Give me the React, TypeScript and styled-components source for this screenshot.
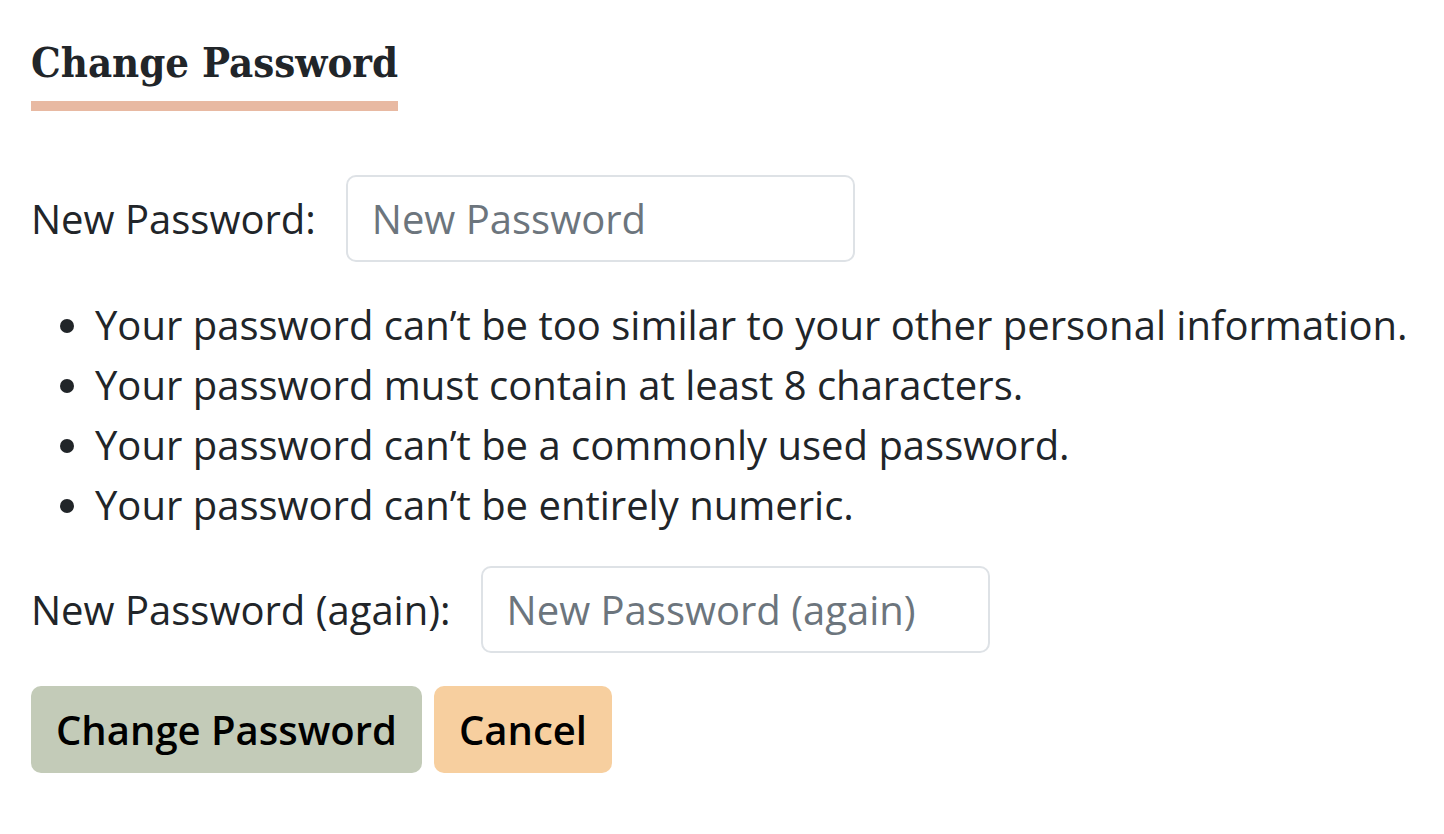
import styled, { createGlobalStyle } from "styled-components";

const GlobalStyle = createGlobalStyle`
    body {
        margin: 0;
        background: #ffffff;
        color: #212529;
        font-family: "Open Sans", "Noto Sans", sans-serif;
    }
`;

const rules = [
    "Your password can’t be too similar to your other personal information.",
    "Your password must contain at least 8 characters.",
    "Your password can’t be a commonly used password.",
    "Your password can’t be entirely numeric.",
];

export default function App() {
    return (
        <>
            <GlobalStyle />
            <Page>
                <Title>Change Password</Title>
                <Form onSubmit={e => e.preventDefault()}>
                    <Field>
                        <Label htmlFor="pw1">New Password:</Label>
                        <Input id="pw1" type="password" placeholder="New Password" />
                    </Field>
                    <Rules>
                        {rules.map(rule => (
                            <li key={rule}>{rule}</li>
                        ))}
                    </Rules>
                    <Field>
                        <Label htmlFor="pw2">New Password (again):</Label>
                        <Input id="pw2" type="password" placeholder="New Password (again)" />
                    </Field>
                    <Actions>
                        <Button type="submit" $tone="primary">
                            Change Password
                        </Button>
                        <Button type="button" $tone="cancel">
                            Cancel
                        </Button>
                    </Actions>
                </Form>
            </Page>
        </>
    );
}

const Page = styled.main`
    padding: 33px 31px;
    display: flex;
    flex-direction: column;
    align-items: flex-start;
`;

const Title = styled.h2`
    display: inline-block;
    margin: 0;
    padding-bottom: 8px;
    font-family: "DejaVu Serif", "Liberation Serif", serif;
    font-stretch: condensed;
    font-weight: 700;
    font-size: 41.5px;
    line-height: 60px;
    color: #212529;
    border-bottom: 10px solid #e8b9a2;
`;

const Form = styled.form`
    margin-top: 64px;
    display: flex;
    flex-direction: column;
    align-items: flex-start;
`;

const Field = styled.div`
    display: flex;
    align-items: center;
`;

const Label = styled.label`
    font-size: 40px;
    line-height: 60px;
    margin-right: 30px;
`;

const Input = styled.input`
    box-sizing: border-box;
    width: 509px;
    height: 87px;
    padding: 12px 24px;
    font-family: inherit;
    font-size: 40px;
    color: #212529;
    background: #fff;
    border: 2px solid #dee2e6;
    border-radius: 10px;
    outline: none;

    &::placeholder {
        color: #6c757d;
    }
`;

const Rules = styled.ul`
    margin: 33px 0 31px;
    padding-left: 64px;
    font-size: 40px;
    line-height: 60px;
`;

const Actions = styled.div`
    margin-top: 33px;
    display: flex;
    gap: 12px;
`;

const Button = styled.button<{ $tone: "primary" | "cancel" }>`
    height: 87px;
    padding: 0 25px;
    font-family: inherit;
    font-weight: 600;
    font-size: 40px;
    color: #000;
    border: none;
    border-radius: 10px;
    cursor: pointer;
    background: ${p => (p.$tone === "primary" ? "#c3cbb8" : "#f7cf9f")};
`;
